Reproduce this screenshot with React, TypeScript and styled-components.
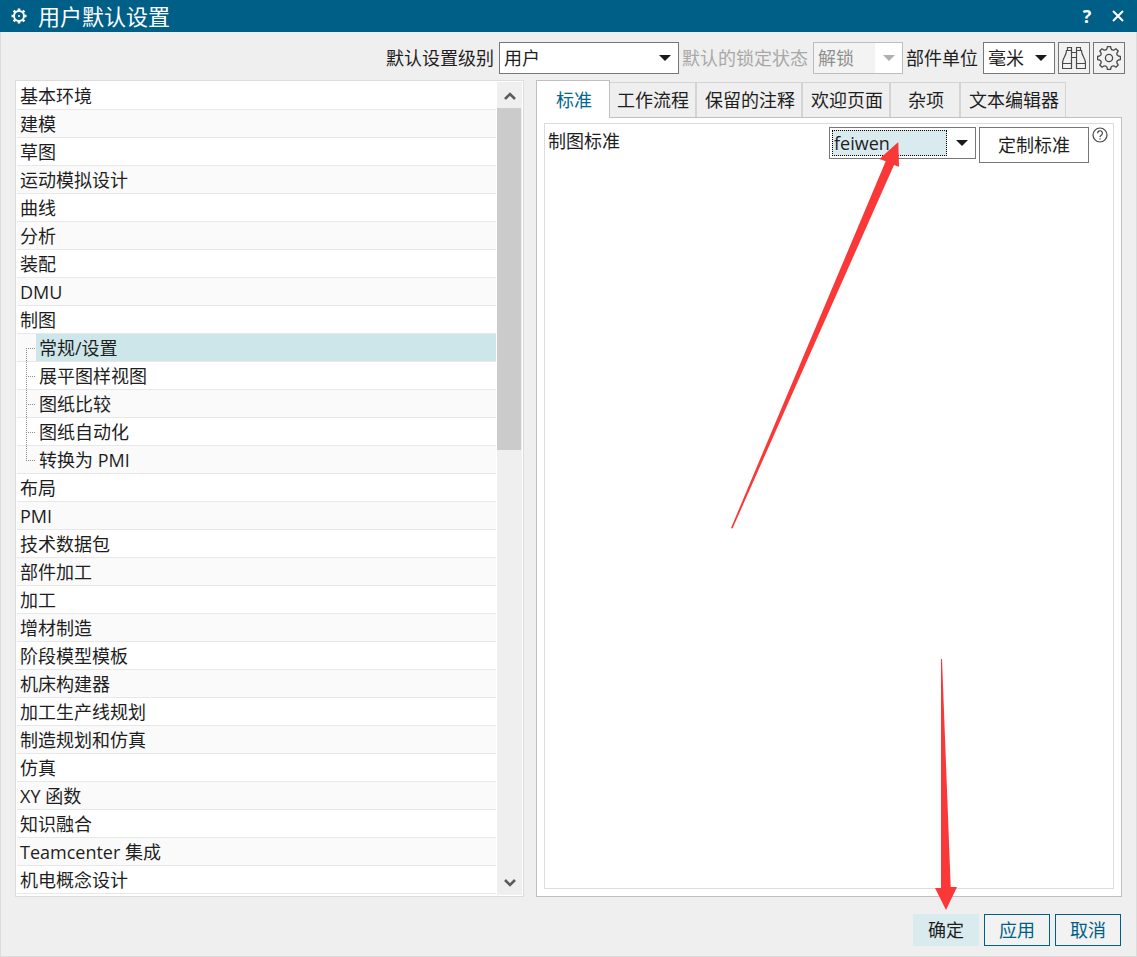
import React from "react";
import styled, { createGlobalStyle, css } from "styled-components";

const color = {
  brand: "#005f87",
  surface: "#efefef",
  line: "#dcdcdc",
  frame: "#c0c0c0",
  control: "#777777",
  text: "#1e1e1e",
  muted: "#a8a8a8",
  tint: "#d9ebef",
  marker: "#fb3838",
};

const GlobalStyle = createGlobalStyle`
  *, *::before, *::after { box-sizing: border-box; }
  body {
    margin: 0;
    background: ${color.surface};
    color: ${color.text};
    font: 18px/28px "Open Sans", "Noto Sans CJK SC", sans-serif;
  }
  button, select { font: inherit; color: inherit; }
`;

const Dialog = styled.div`
  position: relative;
  display: flex;
  flex-direction: column;
  min-height: 100vh;
  background: ${color.surface};
`;

const TitleBar = styled.header`
  display: flex;
  align-items: center;
  height: 32px;
  padding: 0 9px 0 11px;
  gap: 11px;
  background: ${color.brand};
  color: #fff;
`;

const Title = styled.h1`
  flex: 1;
  margin: 0;
  font-size: 22px;
  line-height: 32px;
  font-weight: 400;
`;

const TitleButton = styled.button`
  display: grid;
  place-items: center;
  width: 20px;
  height: 32px;
  padding: 0;
  border: 0;
  background: none;
  font-weight: 700;
`;

const Content = styled.main`
  flex: 1;
  display: flex;
  flex-direction: column;
  border: 1px solid ${color.line};
  border-top: 0;
`;

const Toolbar = styled.div`
  display: flex;
  justify-content: flex-end;
  align-items: center;
  gap: 3px;
  padding: 10px 11px 6px 14px;
`;

const Field = styled.label<{ $muted?: boolean }>`
  display: flex;
  align-items: center;
  gap: 5px;
  white-space: nowrap;
  color: ${(p) => (p.$muted ? color.muted : color.text)};
`;

const SelectFrame = styled.span<{ $width: number; $muted?: boolean }>`
  display: grid;
  grid-template-columns: 1fr 27px;
  align-items: center;
  width: ${(p) => p.$width}px;
  height: 32px;
  border: 1px solid ${(p) => (p.$muted ? "#bdbdbd" : color.control)};
  background: ${(p) => (p.$muted ? `linear-gradient(to left, #fff 27px, #f3f3f3 27px)` : "#fff")};
  color: ${(p) => (p.$muted ? "#8f8f8f" : color.text)};
`;

const NativeSelect = styled.select`
  grid-area: 1 / 1 / 2 / 3;
  width: 100%;
  height: 30px;
  padding: 0 28px 0 4px;
  border: 0;
  outline: 0;
  background: transparent;
  appearance: none;
  opacity: 1;
`;

const SelectArrow = styled.svg<{ $muted?: boolean }>`
  grid-area: 1 / 2;
  justify-self: center;
  pointer-events: none;
  fill: ${(p) => (p.$muted ? "#b0b0b0" : "#1a1a1a")};
`;

const FocusFill = styled.span`
  grid-area: 1 / 1;
  height: 26px;
  margin: 0 1px 0 2px;
  border: 1px dotted #000;
  background: ${color.tint};
`;

const IconButton = styled.button`
  display: grid;
  place-items: center;
  width: 32px;
  height: 32px;
  padding: 0;
  border: 1px solid ${color.control};
  background: #f2f2f2;
`;

const Panels = styled.div`
  flex: 1;
  display: grid;
  grid-template-columns: minmax(0, 509fr) minmax(0, 586fr);
  gap: 12px;
  padding: 0 14px;
`;

const ListPanel = styled.section`
  display: flex;
  gap: 1px;
  padding: 1px;
  border: 1px solid ${color.line};
  background: #fff;
`;

const Tree = styled.ul`
  flex: 1;
  min-width: 0;
  margin: 0;
  padding: 0;
  list-style: none;
`;

const TreeRow = styled.li`
  display: flex;
  height: 28px;
  border-bottom: 1px solid #e8e8e8;
  &:nth-child(even) { background: #fafafa; }
`;

const TreeLabel = styled.span<{ $selected?: boolean }>`
  flex: 1;
  padding-left: 3px;
  line-height: 28px;
  white-space: nowrap;
  ${(p) => p.$selected && css`background: #cde6ea;`}
`;

const Guide = styled.svg`
  flex: none;
  width: 19px;
  height: 28px;
  stroke: #8c8c8c;
  stroke-dasharray: 1 1;
`;

const Scrollbar = styled.div`
  display: flex;
  flex-direction: column;
  width: 25px;
  background: ${color.surface};
`;

const ScrollButton = styled.button`
  display: grid;
  place-items: center;
  height: 26px;
  padding: 2px 0 0;
  border: 0;
  background: none;
`;

const ScrollTrack = styled.div`
  flex: 1;
  display: flex;
  flex-direction: column;
  padding-right: 1px;
`;

const ScrollThumb = styled.div`
  height: 45%;
  background: #cbcbcb;
`;

const TabPanel = styled.section`
  display: flex;
  flex-direction: column;
`;

const TabStrip = styled.div`
  display: flex;
  align-items: flex-end;
`;

const Tab = styled.button<{ $active?: boolean }>`
  height: 35px;
  min-width: 70px;
  padding: 0 6px 0 8px;
  border: 1px solid #d4d4d4;
  border-bottom: 0;
  background: ${color.surface};
  white-space: nowrap;
  ${(p) =>
    p.$active &&
    css`
      z-index: 1;
      height: 38px;
      min-width: 74px;
      margin: 0 -2px -1px 0;
      border-color: ${color.frame};
      background: #fff;
      color: #00698c;
    `}
`;

const TabPage = styled.div`
  flex: 1;
  display: flex;
  padding: 5px 7px 7px;
  border: 1px solid ${color.frame};
  background: #fff;
`;

const Group = styled.div`
  flex: 1;
  padding: 3px 5px 3px 3px;
  border: 1px solid ${color.line};
`;

const SettingRow = styled.div`
  display: flex;
  align-items: flex-start;
  gap: 3px;
`;

const SettingLabel = styled.label`
  flex: 1;
`;

const WideButton = styled.button`
  width: 110px;
  height: 36px;
  padding: 0;
  border: 1px solid ${color.control};
  background: #fff;
`;

const HelpButton = styled.button`
  display: grid;
  height: 16px;
  padding: 0;
  border: 0;
  background: none;
`;

const Footer = styled.footer`
  display: flex;
  justify-content: flex-end;
  gap: 5px;
  padding: 17px 15px 10px;
`;

const ActionButton = styled.button<{ $primary?: boolean }>`
  width: 66px;
  height: 32px;
  padding: 0;
  border: 1px solid ${(p) => (p.$primary ? color.tint : color.brand)};
  background: ${(p) => (p.$primary ? color.tint : "#f2f2f2")};
  color: ${(p) => (p.$primary ? color.text : color.brand)};
`;

const Markers = styled.svg`
  position: absolute;
  top: 0;
  left: 0;
  z-index: 2;
  pointer-events: none;
  fill: ${color.marker};
`;

const point = (radius: number, degrees: number) => {
  const a = (degrees * Math.PI) / 180;
  return `${(12 + radius * Math.sin(a)).toFixed(2)} ${(12 - radius * Math.cos(a)).toFixed(2)}`;
};

const gearPath =
  [0, 45, 90, 135, 180, 225, 270, 315]
    .map((a, i) => `${i ? "" : "M" + point(11.5, a - 8)}L${point(11.5, a + 8)}L${point(9.6, a + 12)}A2.6 2.6 0 0 0 ${point(9.6, a + 33)}L${point(11.5, a + 37)}`)
    .join("") + "Z";

const GearIcon = () => (
  <svg width="24" height="24" viewBox="0 0 24 24" fill="none" stroke="#4a4a4a" strokeWidth="1.3" aria-hidden="true">
    <path d={gearPath} strokeLinejoin="round" />
    <circle cx="12" cy="12" r="3.6" />
  </svg>
);

const BinocularsIcon = () => (
  <svg width="24" height="24" viewBox="0 0 24 24" fill="none" stroke="#4a4a4a" strokeWidth="1.2" aria-hidden="true">
    <path d="M5.5 4.500V1.500h4v3M14.500 4.500V1.500h4v3" />
    <path d="M9.500 4.500h-5C4.500 10 .5 12 .5 17v5.500h9zM14.500 4.500h5C19.500 10 23.500 12 23.500 17v5.500h-9z" />
    <path d="M.5 17.500h9M14.500 17.500h9M9.500 6.500h5M9.500 11.500h5" />
  </svg>
);

const TitleGear = () => (
  <svg width="16" height="16" viewBox="0 0 16 16" fill="none" stroke="#fff" aria-hidden="true">
    <circle cx="8" cy="8" r="5" strokeWidth="2" />
    <path strokeWidth="2.6" d="M8 .5V3M8 13v2.500M.5 8H3M13 8h2.500M2.600 2.600l1.600 1.600M11.800 11.800l1.600 1.600M2.600 13.400l1.600-1.600M11.800 4.200l1.600-1.600" />
    <circle cx="8" cy="8" r="1" fill="#fff" stroke="none" />
  </svg>
);

const CloseIcon = () => (
  <svg width="12" height="12" viewBox="0 0 12 12" stroke="#fff" strokeWidth="2" aria-hidden="true">
    <path d="M1 1l10 10M11 1L1 11" />
  </svg>
);

const HelpIcon = () => (
  <svg width="16" height="16" viewBox="0 0 16 16" fill="none" stroke="#444" strokeWidth="1.2" aria-hidden="true">
    <circle cx="8" cy="8" r="7" />
    <path d="M5.600 6.200a2.400 2.400 0 1 1 3.700 2C8.400 8.800 8 9.100 8 10M8 11.200v1.400" />
  </svg>
);

const Chevron = ({ down }: { down?: boolean }) => (
  <svg width="12" height="10" viewBox="0 0 12 10" fill="none" stroke="#5c5c5c" strokeWidth="2.6" aria-hidden="true">
    <path d={down ? "M1 2l5 5 5-5" : "M1 8l5-5 5 5"} />
  </svg>
);

interface DropdownProps {
  id: string;
  value: string;
  width: number;
  disabled?: boolean;
  highlighted?: boolean;
}

const Dropdown = ({ id, value, width, disabled, highlighted }: DropdownProps) => (
  <SelectFrame $width={width} $muted={disabled}>
    {highlighted && <FocusFill />}
    <NativeSelect id={id} defaultValue={value} disabled={disabled}>
      <option>{value}</option>
    </NativeSelect>
    <SelectArrow width="12" height="6" viewBox="0 0 12 6" $muted={disabled} aria-hidden="true">
      <path d="M0 0h12L6 6z" />
    </SelectArrow>
  </SelectFrame>
);

type Branch = "first" | "middle" | "last";
interface Entry {
  label: string;
  branch?: Branch;
  selected?: boolean;
}

const entries: Entry[] = [
  { label: "基本环境" },
  { label: "建模" },
  { label: "草图" },
  { label: "运动模拟设计" },
  { label: "曲线" },
  { label: "分析" },
  { label: "装配" },
  { label: "DMU" },
  { label: "制图" },
  { label: "常规/设置", branch: "first", selected: true },
  { label: "展平图样视图", branch: "middle" },
  { label: "图纸比较", branch: "middle" },
  { label: "图纸自动化", branch: "middle" },
  { label: "转换为 PMI", branch: "last" },
  { label: "布局" },
  { label: "PMI" },
  { label: "技术数据包" },
  { label: "部件加工" },
  { label: "加工" },
  { label: "增材制造" },
  { label: "阶段模型模板" },
  { label: "机床构建器" },
  { label: "加工生产线规划" },
  { label: "制造规划和仿真" },
  { label: "仿真" },
  { label: "XY 函数" },
  { label: "知识融合" },
  { label: "Teamcenter 集成" },
  { label: "机电概念设计" },
];

const branchPath: Record<Branch, string> = {
  first: "M9.5 14V28M9 14.5H18",
  middle: "M9.5 0V28M9 14.5H18",
  last: "M9.5 0V14M9 14.5H18",
};

const tabs = ["标准", "工作流程", "保留的注释", "欢迎页面", "杂项", "文本编辑器"];

export default function App() {
  return (
    <Dialog>
      <GlobalStyle />
      <TitleBar>
        <TitleGear />
        <Title>用户默认设置</Title>
        <TitleButton aria-label="帮助">?</TitleButton>
        <TitleButton aria-label="关闭"><CloseIcon /></TitleButton>
      </TitleBar>
      <Content>
        <Toolbar>
          <Field htmlFor="level">默认设置级别<Dropdown id="level" value="用户" width={180} /></Field>
          <Field htmlFor="lock" $muted>默认的锁定状态<Dropdown id="lock" value="解锁" width={90} disabled /></Field>
          <Field htmlFor="unit">部件单位<Dropdown id="unit" value="毫米" width={72} /></Field>
          <IconButton aria-label="查找"><BinocularsIcon /></IconButton>
          <IconButton aria-label="管理设置"><GearIcon /></IconButton>
        </Toolbar>
        <Panels>
          <ListPanel>
            <Tree role="tree">
              {entries.map((e) => (
                <TreeRow key={e.label} role="treeitem" aria-selected={!!e.selected}>
                  {e.branch && <Guide viewBox="0 0 19 28" aria-hidden="true"><path d={branchPath[e.branch]} /></Guide>}
                  <TreeLabel $selected={e.selected}>{e.label}</TreeLabel>
                </TreeRow>
              ))}
            </Tree>
            <Scrollbar>
              <ScrollButton aria-label="向上滚动"><Chevron /></ScrollButton>
              <ScrollTrack><ScrollThumb /></ScrollTrack>
              <ScrollButton aria-label="向下滚动"><Chevron down /></ScrollButton>
            </Scrollbar>
          </ListPanel>
          <TabPanel>
            <TabStrip role="tablist">
              {tabs.map((t, i) => (
                <Tab key={t} role="tab" aria-selected={i === 0} $active={i === 0}>{t}</Tab>
              ))}
            </TabStrip>
            <TabPage role="tabpanel">
              <Group>
                <SettingRow>
                  <SettingLabel htmlFor="standard">制图标准</SettingLabel>
                  <Dropdown id="standard" value="feiwen" width={147} highlighted />
                  <WideButton>定制标准</WideButton>
                  <HelpButton aria-label="说明"><HelpIcon /></HelpButton>
                </SettingRow>
              </Group>
            </TabPage>
          </TabPanel>
        </Panels>
        <Footer>
          <ActionButton $primary>确定</ActionButton>
          <ActionButton>应用</ActionButton>
          <ActionButton>取消</ActionButton>
        </Footer>
      </Content>
      <Markers width="960" height="912" viewBox="0 0 960 912" aria-hidden="true">
        <path d="M731 528L885.7 161.3L879.3 159L898.3 142L899 166.7L894 165L732.5 528.5Z" />
        <path d="M941 659L941 888H935L946 910L957 887H950.7L942 659Z" />
      </Markers>
    </Dialog>
  );
}
